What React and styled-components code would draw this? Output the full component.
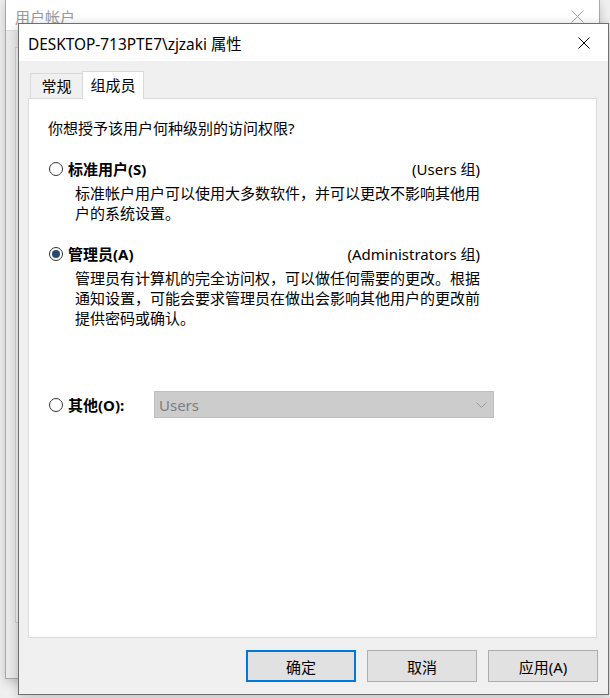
import React from "react";
import styled, { createGlobalStyle } from "styled-components";

const UI = '"Noto Sans", "Noto Sans CJK SC", sans-serif';

const Global = createGlobalStyle`
  html, body { margin: 0; padding: 0; }
  body { background: #eeeeee; font-family: ${UI}; overflow: hidden; }
`;

const Desktop = styled.div`
  position: relative;
  width: 610px;
  height: 698px;
  overflow: hidden;
  background: #efefef;
`;

/* ---------- background window ---------- */
const BackWindow = styled.div`
  position: absolute;
  left: 5px;
  top: 0;
  width: 595px;
  height: 679px;
  box-sizing: border-box;
  border: 1px solid #a8a8a8;
  border-top: none;
  display: flex;
  flex-direction: column;
  box-shadow: 0 3px 9px rgba(0, 0, 0, 0.18);
`;

const BackTitle = styled.div`
  height: 30px;
  flex: none;
  background: #ffffff;
  display: flex;
  align-items: center;
  padding: 3px 15px 0 9px;
  box-sizing: border-box;
  font-size: 15px;
  color: #9a9a9a;
`;

const BackClose = styled.div`
  margin-left: auto;
  display: flex;
`;

const BackBody = styled.div`
  flex: 1;
  background: #e9e9e9;
  border-top: 1px solid #dcdcdc;
  padding: 16px 9px 0 9px;
`;

const BackPanel = styled.div`
  height: 576px;
  box-sizing: border-box;
  border: 1px solid #d2d2d2;
  background: #f3f3f3;
`;

/* ---------- dialog ---------- */
const Dialog = styled.div`
  position: absolute;
  left: 18px;
  top: 23px;
  width: 591px;
  height: 672px;
  box-sizing: border-box;
  border: 1px solid #6e6e6e;
  background: #f0f0f0;
  display: flex;
  flex-direction: column;
  box-shadow: 0 2px 10px rgba(0, 0, 0, 0.22);
`;

const TitleBar = styled.div`
  height: 37px;
  flex: none;
  background: #ffffff;
  display: flex;
  align-items: center;
  padding: 0 18px 0 9px;
  box-sizing: border-box;
`;

const TitleText = styled.div`
  font-family: "Noto Sans", "Noto Sans CJK SC", sans-serif;
  font-size: 15.4px;
  color: #000;
  padding-top: 1px;
`;

const CloseBtn = styled.div`
  margin-left: auto;
  display: flex;
`;

const Body = styled.div`
  flex: 1;
  display: flex;
  flex-direction: column;
  padding: 10px 9px 0 9px;
`;

const TabRow = styled.div`
  display: flex;
  align-items: flex-end;
  height: 28px;
  padding-left: 2px;
`;

const Tab = styled.div`
  position: relative;
  box-sizing: border-box;
  height: ${(p) => (p.$active ? 28 : 26)}px;
  width: ${(p) => p.$w}px;
  background: ${(p) => (p.$active ? "#ffffff" : "#f0f0f0")};
  border: 1px solid #d9d9d9;
  border-bottom: none;
  z-index: ${(p) => (p.$active ? 2 : 0)};
  font-size: 15px;
  color: #000;
  display: flex;
  align-items: center;
  justify-content: center;
  padding-bottom: ${(p) => (p.$active ? 3 : 2)}px;
  margin-left: ${(p) => (p.$active ? -1 : 0)}px;
`;

const Panel = styled.div`
  position: relative;
  z-index: 1;
  margin-top: -1px;
  width: 569px;
  height: 540px;
  box-sizing: border-box;
  border: 1px solid #d9d9d9;
  background: #ffffff;
  padding: 19px 0 0 19px;
  font-size: 15px;
  color: #000;
`;

const Line = styled.div`
  line-height: 20px;
  height: 20px;
  margin-top: ${(p) => p.$mt || 0}px;
`;

const RadioRow = styled.div`
  display: flex;
  align-items: center;
  width: 432px;
  height: 20px;
  margin-top: ${(p) => p.$mt || 0}px;
`;

const Radio = styled.span`
  flex: none;
  width: 14px;
  height: 14px;
  box-sizing: border-box;
  border-radius: 50%;
  border: 1px solid #333333;
  margin-left: 1px;
  display: flex;
  align-items: center;
  justify-content: center;
  background: #fff;
  &::after {
    content: "";
    display: ${(p) => (p.$checked ? "block" : "none")};
    width: 8px;
    height: 8px;
    border-radius: 50%;
    background: #294a6f;
  }
`;

const RadioLabel = styled.span`
  font-weight: 700;
  margin-left: 5px;
  line-height: 20px;
  white-space: nowrap;
`;

const GroupName = styled.span`
  margin-left: auto;
  line-height: 20px;
  white-space: nowrap;
`;

const Desc = styled.div`
  margin-top: ${(p) => p.$mt || 4}px;
  padding-left: 27px;
  line-height: 20px;
  white-space: nowrap;
`;

const OtherRow = styled.div`
  display: grid;
  grid-template-columns: 20px 86px 340px;
  align-items: center;
  height: 27px;
  margin-top: 63px;
  & > ${RadioLabel} {
    margin-left: 0;
  }
`;

const Select = styled.div`
  box-sizing: border-box;
  height: 27px;
  background: #cccccc;
  border: 1px solid #bfbfbf;
  display: flex;
  align-items: center;
  padding: 0 6px 0 4px;
  color: #7d7d7d;
  font-size: 15px;
`;

const Chevron = styled.span`
  margin-left: auto;
  display: flex;
`;

const ButtonRow = styled.div`
  display: flex;
  justify-content: flex-end;
  gap: 11px;
  margin-top: 12px;
  padding-right: 1px;
`;

const Button = styled.div`
  width: 110px;
  height: 32px;
  box-sizing: border-box;
  background: #e1e1e1;
  border: ${(p) => (p.$default ? "2px solid #0078d7" : "1px solid #adadad")};
  display: flex;
  align-items: center;
  justify-content: center;
  font-size: 15px;
  color: #000;
`;

const XIcon = ({ size, color }) => (
  <svg width={size} height={size} viewBox={`0 0 ${size} ${size}`}>
    <path
      d={`M0.5 0.5 L${size - 0.5} ${size - 0.5} M${size - 0.5} 0.5 L0.5 ${size - 0.5}`}
      stroke={color}
      strokeWidth="1"
      fill="none"
    />
  </svg>
);

export default function App() {
  return (
    <>
      <Global />
      <Desktop>
        <BackWindow>
          <BackTitle>
            用户帐户
            <BackClose>
              <XIcon size={13} color="#a0a0a0" />
            </BackClose>
          </BackTitle>
          <BackBody>
            <BackPanel />
          </BackBody>
        </BackWindow>

        <Dialog>
          <TitleBar>
            <TitleText>DESKTOP-713PTE7\zjzaki 属性</TitleText>
            <CloseBtn>
              <XIcon size={12} color="#000" />
            </CloseBtn>
          </TitleBar>
          <Body>
            <TabRow>
              <Tab $w={53}>常规</Tab>
              <Tab $w={62} $active>
                组成员
              </Tab>
            </TabRow>
            <Panel>
              <Line>你想授予该用户何种级别的访问权限?</Line>

              <RadioRow $mt={21}>
                <Radio />
                <RadioLabel>标准用户(S)</RadioLabel>
                <GroupName>(Users 组)</GroupName>
              </RadioRow>
              <Desc>
                标准帐户用户可以使用大多数软件，并可以更改不影响其他用
                <br />
                户的系统设置。
              </Desc>

              <RadioRow $mt={21}>
                <Radio $checked />
                <RadioLabel>管理员(A)</RadioLabel>
                <GroupName>(Administrators 组)</GroupName>
              </RadioRow>
              <Desc>
                管理员有计算机的完全访问权，可以做任何需要的更改。根据
                <br />
                通知设置，可能会要求管理员在做出会影响其他用户的更改前
                <br />
                提供密码或确认。
              </Desc>

              <OtherRow>
                <Radio />
                <RadioLabel>其他(O):</RadioLabel>
                <Select>
                  Users
                  <Chevron>
                    <svg width="11" height="6" viewBox="0 0 11 6">
                      <path d="M0.5 0.5 L5.5 5.5 L10.5 0.5" stroke="#9a9a9a" fill="none" strokeWidth="1" />
                    </svg>
                  </Chevron>
                </Select>
              </OtherRow>
            </Panel>
            <ButtonRow>
              <Button $default>确定</Button>
              <Button>取消</Button>
              <Button>应用(A)</Button>
            </ButtonRow>
          </Body>
        </Dialog>
      </Desktop>
    </>
  );
}
